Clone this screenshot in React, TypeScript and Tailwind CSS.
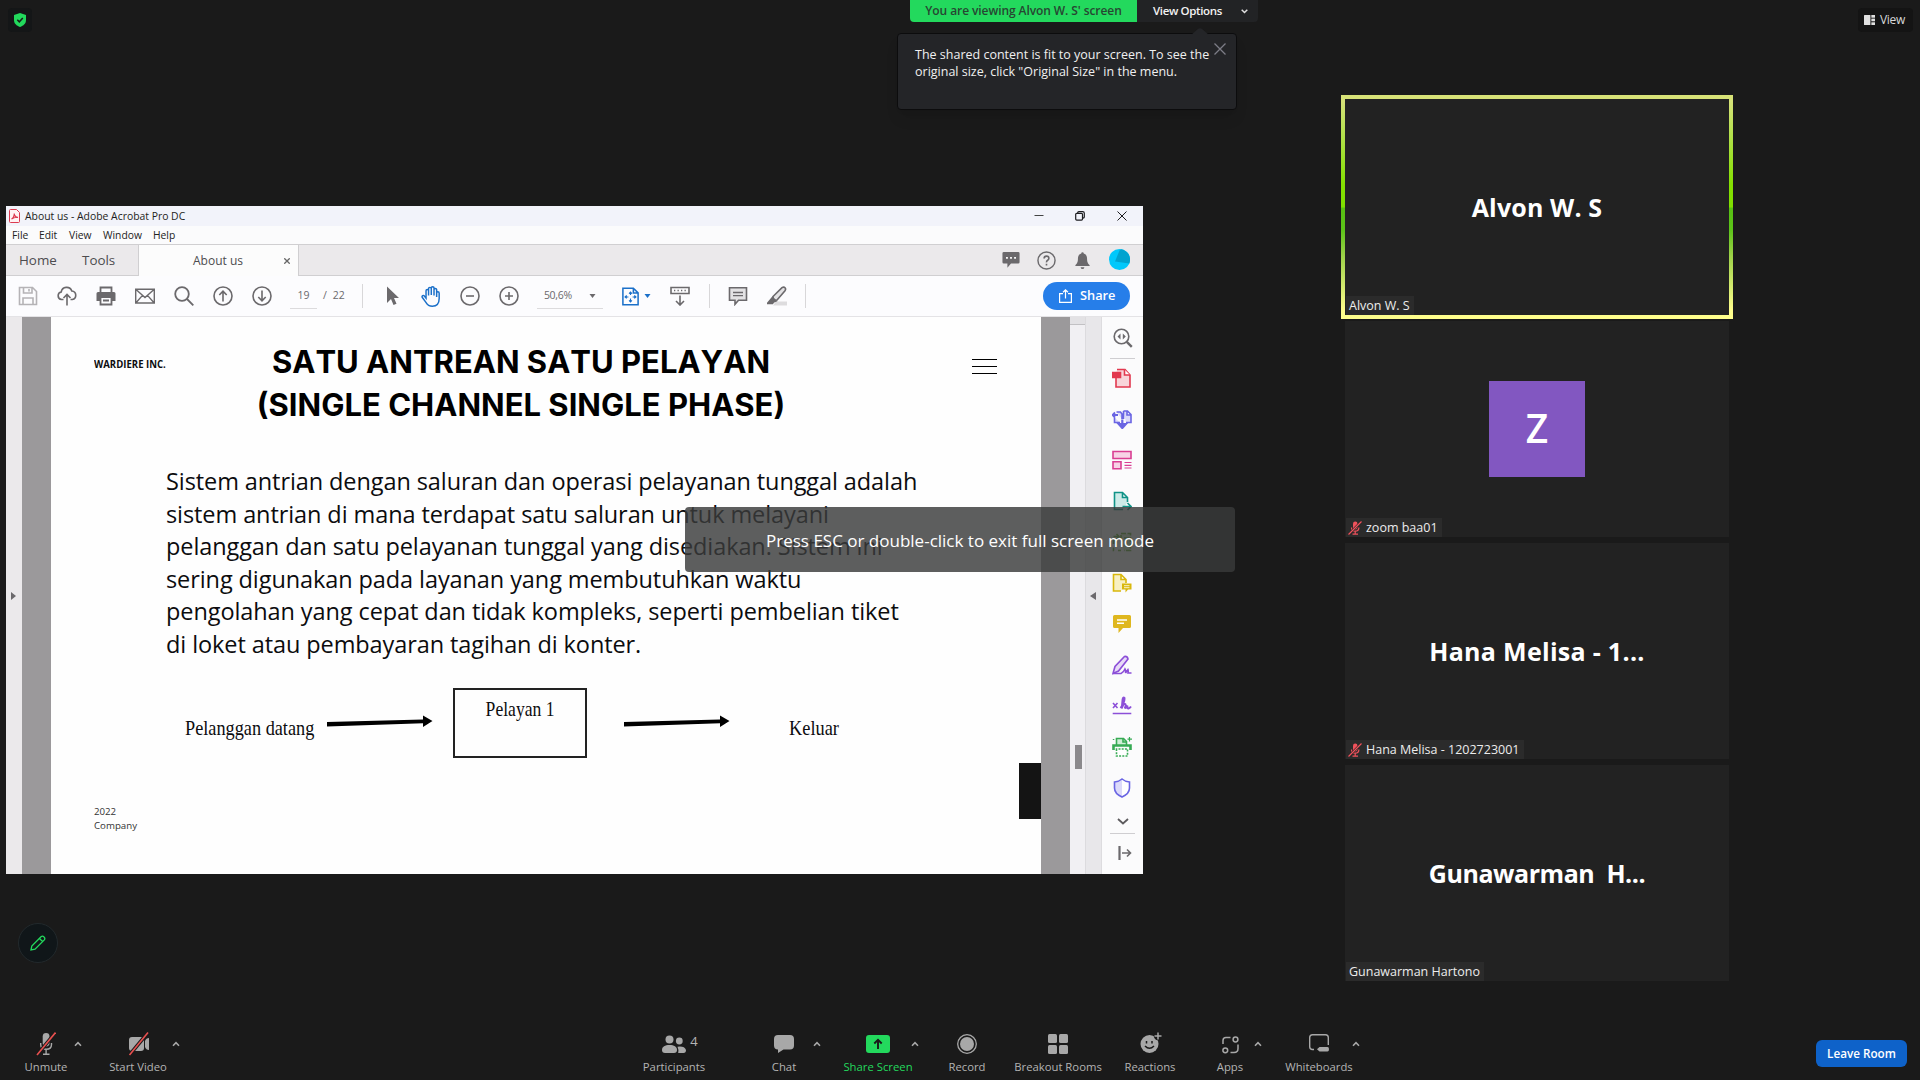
import type { ReactNode } from "react";
import { clsx } from "clsx";

type SvgProps = {
  children: ReactNode;
  size?: number;
  className?: string;
  stroke?: number;
};

// Outline icon on a 20px grid, coloured by currentColor
function Svg({ children, size = 20, className, stroke = 1.6 }: SvgProps) {
  return (
    <svg
      width={size}
      height={size}
      viewBox="0 0 20 20"
      fill="none"
      stroke="currentColor"
      strokeWidth={stroke}
      className={clsx("shrink-0", className)}
    >
      {children}
    </svg>
  );
}

function Caret({ className }: { className?: string }) {
  return (
    <svg width="7" height="4" viewBox="0 0 7 4" fill="currentColor" className={clsx("shrink-0", className)}>
      <path d="M0.500 0h6L3.500 4z" />
    </svg>
  );
}

/* ---------- Meeting header ---------- */

function MeetingHeader() {
  return (
    <header className="flex h-10 shrink-0 items-start">
      <div className="ml-2 mt-2 flex h-6 w-6 items-center justify-center rounded bg-[#141617]">
        <svg width="12" height="14" viewBox="0 0 12 14">
          <path d="M6 0l6 2v5c0 3.500-2.500 5.700-6 7-3.500-1.300-6-3.500-6-7V2z" fill="#22d95c" />
          <path d="M3.300 6.800l2 2 3.500-3.800" fill="none" stroke="#1a1a1a" strokeWidth="1.500" />
        </svg>
      </div>

      <div className="relative ml-[878px] flex h-[22px] w-[348px] overflow-visible">
        <div className="flex w-[227px] items-center justify-center rounded-bl bg-[#23d95d] text-[12px] font-semibold tracking-[-0.08px] whitespace-nowrap text-[#274632]">
          You are viewing Alvon W. S' screen
        </div>
        <div className="flex flex-1 items-center rounded-br bg-[#222325] pl-4 text-[11.5px] font-semibold tracking-[-0.36px] whitespace-nowrap text-[#f2f2f2]">
          <span className="w-[69px]">View Options</span>
          <svg width="7" height="5" viewBox="0 0 7 5" fill="none" stroke="#e0e0e0" strokeWidth="1.500" className="ml-[19px]">
            <path d="M0.700 0.700l2.800 2.800 2.800-2.800" />
          </svg>
        </div>

        <div className="absolute top-[33px] -left-[13px] z-10 flex h-[77px] w-[340px] rounded border border-[#0c0c0d] bg-[#242528] pt-[12px] pl-[17px] shadow-lg">
          <svg width="18" height="7" viewBox="0 0 18 7" className="absolute -top-[6px] left-[293px]">
            <path d="M0 7l7-6q2-1.500 4 0l7 6z" fill="#242528" />
          </svg>
          <p className="w-[297px] text-[12.5px] leading-[17px] whitespace-nowrap text-[#f0f0f0]">
            The shared content is fit to your screen. To see the
            <br />
            original size, click "Original Size" in the menu.
          </p>
          <svg width="12" height="12" viewBox="0 0 12 12" stroke="#7d7d86" strokeWidth="1.300" className="-mt-[3px] ml-[2px]">
            <path d="M0.500 0.500l11 11M11.500 0.500l-11 11" />
          </svg>
        </div>
      </div>

      <div className="mt-2 mr-[7px] ml-auto flex h-6 items-center gap-[5px] rounded bg-[#141414] pr-2 pl-[6px] text-[12px] tracking-[-0.3px] text-[#d8d8d8]">
        <svg width="11" height="10" viewBox="0 0 12 10" fill="#e0e0e0" preserveAspectRatio="none">
          <rect width="7" height="10" rx="0.500" />
          <rect x="8" width="4" height="2.700" />
          <rect x="8" y="3.600" width="4" height="2.700" />
          <rect x="8" y="7.300" width="4" height="2.700" />
        </svg>
        View
      </div>
    </header>
  );
}

/* ---------- Shared Acrobat window ---------- */

function TitleBar() {
  return (
    <div className="flex h-5 items-center bg-[#f2f3fa] pl-[3px] text-[#1d1d20]">
      <svg width="11" height="14" viewBox="0 0 11 14" fill="none" stroke="#dc3b50">
        <path d="M0.500 1.500q0-1 1-1h6l3 3v9q0 1-1 1h-8q-1 0-1-1z" fill="#fff2f3" />
        <path d="M2.500 10c2-1 3-4 2.700-5.500 0 2 1.800 4 3.800 3.800-2.500-.3-4.500.2-6.500 1.700z" strokeWidth="1.200" />
      </svg>
      <span className="ml-[5px] pt-[2px] text-[10.4px] whitespace-nowrap">About us - Adobe Acrobat Pro DC</span>
      <div className="mr-[16px] ml-auto flex items-center">
        <svg width="10" height="10" viewBox="0 0 10 10" stroke="#444">
          <path d="M0.500 4.500h9" />
        </svg>
        <svg width="10" height="10" viewBox="0 0 10 10" stroke="currentColor" fill="none" strokeWidth="1.200" className="ml-[31px]">
          <rect x="0.700" y="2.300" width="6.800" height="6.800" rx="1" />
          <path d="M2.700 2V1.800q0-1.200 1.200-1.200h3.800q1.600 0 1.600 1.600v3.600q0 1.300-1.400 1.300" />
        </svg>
        <svg width="10" height="10" viewBox="0 0 10 10" stroke="currentColor" className="ml-[32px]">
          <path d="M0.500 0.500l9 9M9.500 0.500l-9 9" />
        </svg>
      </div>
    </div>
  );
}

function MenuBar() {
  return (
    <div className="flex h-[18px] items-center bg-[#fbfbfc] pt-[2px] pl-[6px] text-[10.3px] text-[#222]">
      <span className="w-[27px]">File</span>
      <span className="w-[30px]">Edit</span>
      <span className="w-[34px]">View</span>
      <span className="w-[50px]">Window</span>
      <span>Help</span>
    </div>
  );
}

function TabBar() {
  return (
    <div className="flex h-8 border-y border-[#d0cfd1] bg-[#ebe9eb] text-[#4d4c4f]">
      <div className="flex w-[133px] items-center border-r border-[#d0cfd1] pl-[13px] text-[13.4px]">
        <span className="w-[63px]">Home</span>
        <span>Tools</span>
      </div>
      <div className="-mb-px flex w-[160px] items-center border-r border-[#d0cfd1] bg-[#fcfcfc] pl-[54px] text-[12px]">
        <span className="w-[50px] whitespace-nowrap">About us</span>
        <svg width="6" height="6" viewBox="0 0 6 6" stroke="#666" strokeWidth="1.300" className="ml-[41px]">
          <path d="M0.300 0.300l5.400 5.400M5.700 0.300l-5.400 5.400" />
        </svg>
      </div>
      <div className="mr-[13px] ml-auto flex items-center text-[#6b696c]">
        <Svg size={18}>
          <path d="M2 1h16q1.500 0 1.500 1.500v10q0 1.500-1.500 1.500h-8l-4 4.500V14H2Q.5 14 .5 12.500v-10Q.5 1 2 1z" fill="currentColor" stroke="none" />
          <path d="M4.500 7.700h2M9 7.700h2M13.500 7.700h2" stroke="#fff" strokeWidth="2" />
        </Svg>
        <Svg size={19} className="ml-[17px]" stroke={1.500}>
          <circle cx="10" cy="10" r="9" />
          <path d="M7.500 8q0-2.600 2.500-2.600T12.500 7.700q0 1.200-1.300 2T10 12M10 13.500v1.700" strokeWidth="1.700" />
        </Svg>
        <Svg size={19} className="ml-[17px]">
          <path
            d="M10 1.200q1.300 0 1.300 1.500c2.600.7 3.500 2.800 3.500 5.300 0 4 .8 5.200 2.700 7v.8h-15V15c1.900-1.800 2.700-3 2.700-7 0-2.500.9-4.600 3.500-5.300Q8.700 1.200 10 1.200zM8 17h4q-.3 2-2 2t-2-2z"
            fill="currentColor"
            stroke="none"
          />
        </Svg>
        <svg width="21" height="21" viewBox="0 0 21 21" className="ml-[17px] -mt-px">
          <circle cx="10.500" cy="10.500" r="10.500" fill="#00c8fb" />
          <path d="M10.500 1.500L6 12.500l14.300 2A10.500 10.500 0 0 0 12 .2z" fill="#00a3cf" />
        </svg>
      </div>
    </div>
  );
}

// Icons sit in fixed-width cells so that their centres keep the 39px rhythm
function Tool({ children, className }: { children: ReactNode; className?: string }) {
  return <div className={clsx("flex w-[39px] shrink-0 justify-center", className)}>{children}</div>;
}

function Toolbar() {
  return (
    <div className="flex h-[41px] items-center border-b border-[#e4e3e6] bg-[#fcfcfe] pl-[2px] text-[#6b696c]">
      <Tool className="text-[#b5b3b6]">
        <Svg>
          <path d="M1.500 1.500h13l4 4v13h-17zM5.500 1.500v5.500h8.500v-5.500M5 18.500v-6.500h10v6.500M11 3v2.500" />
        </Svg>
      </Tool>
      <Tool>
        <Svg>
          <path d="M6.500 13.500H4.500a3.800 3.800 0 0 1-.3-7.500A5.500 5.500 0 0 1 14.800 5a4.300 4.300 0 0 1 .5 8.500H13.500M10 19.500V9M6.500 12L10 8.500l3.500 3.500" />
        </Svg>
      </Tool>
      <Tool>
        <Svg>
          <path d="M4.500 6V1.500h11V6" strokeWidth="1.800" />
          <path d="M2 6h16q1.500 0 1.500 1.500V15h-3.500v-3H4v3H.5V7.500Q.5 6 2 6z" fill="currentColor" stroke="none" />
          <path d="M4.500 11h11v7.500h-11zM7 14.500h6" strokeWidth="1.800" />
        </Svg>
      </Tool>
      <Tool>
        <Svg stroke={1.400}>
          <path d="M.7 3.200h18.600v13.800H.7zM1 3.500l9 8 9-8M1 16.700l6.500-7.300M19 16.700l-6.500-7.300" />
        </Svg>
      </Tool>
      <Tool>
        <Svg stroke={1.800}>
          <circle cx="8" cy="8" r="6.800" />
          <path d="M13 13l6.300 6.300" />
        </Svg>
      </Tool>
      <Tool className="pl-px">
        <Svg>
          <circle cx="10" cy="10" r="9" />
          <path d="M10 15.500V5.500M6.300 9L10 5.200 13.700 9" />
        </Svg>
      </Tool>
      <Tool className="pl-px">
        <Svg>
          <circle cx="10" cy="10" r="9" />
          <path d="M10 4.500v10M6.300 11l3.700 3.800 3.700-3.800" />
        </Svg>
      </Tool>

      <span className="ml-[9px] flex h-[25px] w-[27px] items-center justify-center border-b border-[#dcdbdd] text-[10.5px]">19</span>
      <span className="ml-[6px] text-[10.5px]">/</span>
      <span className="ml-[6px] text-[10.5px]">22</span>
      <div className="ml-[17px] h-6 w-px bg-[#d8d7d9]" />

      <Tool className="ml-[10px]">
        <Svg>
          <path d="M5 .5v16.500l4-4 2.500 6 3-1.300-2.500-5.700h5z" fill="currentColor" stroke="none" />
        </Svg>
      </Tool>
      <Tool className="text-[#1b70c9]">
        <Svg size={21} stroke={1.400}>
          <path d="M4.800 11.500V4.600q0-1.300 1.200-1.300t1.200 1.300V9V2.600q0-1.300 1.300-1.300t1.300 1.300V8.500V2q0-1.200 1.300-1.200T12.400 2v7V3.500q0-1.200 1.200-1.200T14.900 3.500v7V6.800q0-1.300 1.200-1.300t1.200 1.300V12c0 5-2.300 7.300-6.500 7.300-3.500 0-5-1.800-6.300-4L1.300 11q-.7-1.300.3-1.900 1-.5 1.800.6z" />
        </Svg>
      </Tool>
      <Tool>
        <Svg>
          <circle cx="10" cy="10" r="9" />
          <path d="M6 10h8" />
        </Svg>
      </Tool>
      <Tool>
        <Svg>
          <circle cx="10" cy="10" r="9" />
          <path d="M6 10h8M10 6v8" />
        </Svg>
      </Tool>

      <div className="ml-[8px] flex h-[25px] w-[66px] items-center border-b border-[#dcdbdd] pl-[7px] text-[10.5px]">
        <span className="w-[29px] tracking-[-0.3px]">50,6%</span>
        <Caret className="ml-[16px]" />
      </div>
      <div className="ml-[18px] flex items-center gap-[5px] text-[#1b70c9]">
        <Svg size={19} className="-mr-px">
          <path d="M2 1.200h11l5 5v12.600H2zM13 1.200v5h5" />
          <path d="M10 5.500v3M10 12v3.500M4.500 10.500h3.300M12.200 10.500h3.300M8.500 7L10 5.300 11.500 7M8.500 14l1.500 1.700 1.500-1.700M6 9l-1.700 1.500L6 12M14 9l1.700 1.500L14 12" strokeWidth="1.200" />
        </Svg>
        <Caret />
      </div>
      <Tool className="ml-[10px]">
        <Svg>
          <path d="M1 1.500h18v6H1z" />
          <path d="M4 4.500h1.300M7.500 4.500h1.300M11 4.500h1.300M14.500 4.500h1.300" />
          <path d="M10 9.500v9M6 15l4 4 4-4" />
        </Svg>
      </Tool>
      <div className="ml-[9px] h-6 w-px bg-[#d8d7d9]" />
      <Tool className="ml-[9px]">
        <Svg>
          <path d="M1.500 1.800h17v12.500h-8l-3.500 4v-4H1.500z" fill="#e3e2e4" />
          <path d="M5 6.500h10M5 9.700h10" strokeWidth="1.300" />
        </Svg>
      </Tool>
      <Tool>
        <Svg>
          <path d="M9 15.500h11v4H6z" fill="#dddcde" stroke="none" />
          <path d="M6 10.500L15 1.700q1.800-1.300 3 0t0 3L10 14l-3.500.5z" fill="#e3e2e4" />
          <path d="M5.500 11.500l3.500 3.500-2.500 1-1 1.500H.5z" fill="currentColor" />
        </Svg>
      </Tool>
      <div className="ml-[8px] h-6 w-px bg-[#d8d7d9]" />

      <button className="mr-[13px] ml-auto flex h-7 w-[87px] items-center rounded-full bg-[#267ee9] pl-4 text-[12.8px] font-semibold text-white">
        <svg width="13" height="14" viewBox="0 0 13 14" fill="none" stroke="#fff" strokeWidth="1.200">
          <path d="M4 4.600H.6v8.700h11.800V4.600H9M6.500 9.500V1M4 3.300L6.500.9 9 3.300" />
        </svg>
        <span className="ml-[8px]">Share</span>
      </button>
    </div>
  );
}

function FlowArrow({ className }: { className?: string }) {
  return (
    <svg width="106" height="14" viewBox="0 0 106 14" className={className}>
      <path d="M0 7l96-2.500V0.500L105.500 6 96 12V8.200L0 11.500z" fill="#000" />
    </svg>
  );
}

function Slide() {
  return (
    <div className="flex w-[990px] flex-col overflow-hidden bg-[#fefefe] text-[#0c0c0e]">
      <div className="flex h-[148px] items-start pt-[23px] pl-[43px]">
        <span className="mt-[16px] w-[129px] origin-left scale-x-[0.93] text-[10.3px] leading-[16px] font-bold whitespace-nowrap">
          WARDIERE INC.
        </span>
        <h1 className="w-[596px] text-center font-['Inter',sans-serif] text-[31px] leading-[43px] font-bold whitespace-nowrap text-black [font-kerning:none] [font-optical-sizing:none]">
          SATU ANTREAN SATU PELAYAN
          <br />
          (SINGLE CHANNEL SINGLE PHASE)
        </h1>
        <div className="mt-[19px] ml-[153px] flex w-[25px] flex-col gap-[6px]">
          <div className="h-px bg-black" />
          <div className="h-px bg-black" />
          <div className="h-px bg-black" />
        </div>
      </div>

      <p className="h-[195px] pl-[115px] text-[23.5px] leading-[32.5px] tracking-[-0.09px] whitespace-nowrap">
        Sistem antrian dengan saluran dan operasi pelayanan tunggal adalah
        <br />
        sistem antrian di mana terdapat satu saluran untuk melayani
        <br />
        pelanggan dan satu pelayanan tunggal yang disediakan. Sistem ini
        <br />
        sering digunakan pada layanan yang membutuhkan waktu
        <br />
        pengolahan yang cepat dan tidak kompleks, seperti pembelian tiket
        <br />
        di loket atau pembayaran tagihan di konter.
      </p>

      <div className="mt-[28px] flex h-[70px] items-start pl-[134px] font-['Liberation_Serif',serif] text-[22px] leading-[24px] whitespace-nowrap">
        <span className="mt-[28px] w-[142px] origin-left scale-x-[0.83]">Pelanggan datang</span>
        <FlowArrow className="mt-[27px]" />
        <div className="ml-[20px] flex h-[70px] w-[134px] justify-center border-2 border-[#222] pt-[7px]">
          <span className="origin-center scale-x-[0.8]">Pelayan 1</span>
        </div>
        <FlowArrow className="mt-[27px] ml-[37px]" />
        <span className="mt-[28px] ml-[59px] origin-left scale-x-[0.835]">Keluar</span>
      </div>

      <div className="flex grow items-start justify-between pt-[5px] pl-[43px]">
        <p className="mt-[42px] text-[9.7px] leading-[13.5px] text-[#333]">
          2022
          <br />
          Company
        </p>
        <div className="h-[56px] w-[22px] bg-[#141414]" />
      </div>
    </div>
  );
}

function SideIcon({ children, className }: { children: ReactNode; className?: string }) {
  return (
    <div className={clsx("flex h-[41px] shrink-0 items-center justify-center pr-px", className)}>
      <Svg>{children}</Svg>
    </div>
  );
}

function ToolsPane() {
  return (
    <div className="flex w-[42px] flex-col border-l border-[#dddcdf] bg-[#fbfbfc]">
      <div className="flex h-[41px] items-center justify-center text-[#6b696c]">
        <Svg>
          <circle cx="8.500" cy="8.500" r="7.300" />
          <path d="M13.800 13.800l5 5" strokeWidth="2.400" />
          <path d="M7.500 5.500v6l-3-3zM9.800 5.500v6l3-3z" fill="currentColor" stroke="none" />
        </Svg>
      </div>
      <div className="mx-auto -mb-[2px] h-px w-[25px] shrink-0 bg-[#cfced1]" />

      <SideIcon className="text-[#e2394f]">
        <path d="M4 8v11h14V7l-5-5.500H5" fill="#f8d5da" />
        <path d="M.5 4.500h8v5h-8z" fill="#e2394f" />
        <path d="M12.500 1.500V7H18" fill="#fff" />
      </SideIcon>
      <SideIcon className="text-[#6a65e3]">
        <path d="M8 13.500H2.500V8.500M4.500 3h4l1.500 2v5M11.500 2h4l3.500 3.500v8h-5M11.500 2v8M15 2v4h4" fill="#dcdafa" />
        <path d="M.5 6h5.500M3 3.500L.5 6 3 8.500" strokeWidth="1.800" />
        <path d="M10.300 10.500v5M6.800 15h7l-3.500 4z" fill="currentColor" strokeWidth="2.200" />
      </SideIcon>
      <SideIcon className="text-[#d93e92]">
        <path d="M1 1.500h18v7H1zM1 11.800h8v7H1z" fill="#f7d3e6" />
        <path d="M12.500 12.500h7M12.500 15.300h7M12.500 18h7" strokeWidth="1.200" />
      </SideIcon>
      <SideIcon className="text-[#109387]">
        <path d="M11 18.500H2.500v-17h8l5 5V11M10.500 1.500v5h5" fill="#cdebe8" />
        <path d="M10.500 15.500h8M15.500 12l3.500 3.500-3.500 3.500" />
      </SideIcon>
      <SideIcon className="text-[#5fae25]">
        <path d="M9 8V1.500h9.500v17H12M9 18.500H6M2 18.500h-.5v-3M1.500 12V8h3M12 6h5" fill="#dff0ce" strokeDasharray="5 1.500" />
        <path d="M1.500 4.500h5M4.500 2l2.500 2.500L4.500 7" />
      </SideIcon>
      <SideIcon className="text-[#d9b80c]">
        <path d="M9 18H1.500V1.500H9l5 5V10M9 1.500v5h5" fill="#f8f0c2" />
        <path d="M10 10.500h9.500v6H16l-2.500 3v-3H10z" fill="currentColor" stroke="none" />
        <path d="M12 12.700h5.500M12 14.700h5.500" stroke="#fff" strokeWidth=".8" />
      </SideIcon>
      <SideIcon className="text-[#dfb71f]">
        <path d="M2.500 1h15Q19 1 19 2.500v10q0 1.500-1.500 1.500H11l-4.500 5V14h-4Q1 14 1 12.500v-10Q1 1 2.500 1z" fill="currentColor" stroke="none" />
        <path d="M5 6h10M5 9.300h7" stroke="#fff" />
      </SideIcon>
      <SideIcon className="text-[#8c4fd8]">
        <path d="M1 18.500l2-7L12.500 1.500q2.800-.5 3.500 2.500L6.500 16z" fill="#e8daf7" />
        <path d="M1 18.500h8q2.500-1 4-4.500 1 1.500.5 4l2.500-3.500q.5 1 0 3.500h3.500" />
      </SideIcon>
      <SideIcon className="text-[#8c4fd8]">
        <path d="M1 7l4.500 5M5.500 7L1 12M.7 17.500h18.600" />
        <path d="M8.500 12Q13 6 12.500 2 11 .5 10.500 4L9.700 12.500q1.800-5 3.300-4.500t0 3.500q.7 1.500 2.500-2-.5 3.500 1 3t2.500-2" strokeWidth="1.900" />
      </SideIcon>
      <SideIcon className="text-[#37ab54]">
        <path d="M4.500 8V1.500h7l3 3V8" fill="#cfeed6" />
        <path d="M11 1.500v3.500h3.500" />
        <path d="M1.500 13V8.500h17V13" strokeWidth="2.600" />
        <path d="M4.500 12v7h11v-7z" fill="#fff" strokeDasharray="2 1.200" />
        <path d="M17.500 0v4.500M15.500 2.200h4.500M.8 2.500h1.500" strokeWidth="1.200" />
      </SideIcon>
      <SideIcon className="text-[#6a65e3]">
        <path d="M10 1v18c4.500-2 7.500-5 7.500-9V4Q13 3.500 10 1z" fill="#fff" stroke="none" />
        <path d="M10 1v18C5.500 17 2.500 14 2.500 10V4Q7 3.500 10 1z" fill="#dcdafa" stroke="none" />
        <path d="M10 1q3 2.500 7.500 3v6c0 4-3 7-7.500 9C5.500 17 2.500 14 2.500 10V4Q7 3.500 10 1z" />
      </SideIcon>

      <svg width="12" height="7" viewBox="0 0 12 7" fill="none" stroke="#5d5b5e" strokeWidth="1.800" className="mx-auto mt-[10px] shrink-0">
        <path d="M1 1l5 4.500L11 1" />
      </svg>
      <div className="mx-auto mt-[8px] h-px w-[25px] shrink-0 bg-[#cfced1]" />
      <svg width="14" height="14" viewBox="0 0 14 14" fill="none" stroke="#6b696c" strokeWidth="1.600" className="mt-[12px] ml-[16px] shrink-0">
        <path d="M1.500 0v14" strokeWidth="2.200" />
        <path d="M4 7h8.500M9 3.500L12.500 7 9 10.500" />
      </svg>
    </div>
  );
}

function SharedWindow() {
  return (
    <section className="flex h-[668px] w-[1137px] flex-col bg-white">
      <TitleBar />
      <MenuBar />
      <TabBar />
      <Toolbar />
      <div className="flex min-h-0 flex-1">
        <div className="flex w-4 items-center justify-center bg-[#ebe9eb] pr-px">
          <svg width="5" height="8" viewBox="0 0 5 8" fill="#6b696c">
            <path d="M0 0v8l5-4z" />
          </svg>
        </div>
        <div className="w-[29px] bg-[#9b999b]" />
        <Slide />
        <div className="w-[29px] bg-[#9b999b]" />
        <div className="flex w-4 flex-col items-center border-r border-[#dcdbde] bg-[#f1f0f3]">
          <div className="h-2 w-full border-b border-[#c2c1c4] bg-[#e3e2e5]" />
          <div className="mt-[420px] ml-px h-6 w-[7px] bg-[#8b898c]" />
        </div>
        <div className="flex w-[15px] items-center justify-center bg-[#e8e7ea] pr-px">
          <svg width="6" height="8" viewBox="0 0 6 8" fill="#6b696c">
            <path d="M6 0v8L0 4z" />
          </svg>
        </div>
        <ToolsPane />
      </div>
    </section>
  );
}

/* ---------- Participants ---------- */

type Participant = {
  label: string;
  name?: string;
  nameClass?: string;
  initial?: string;
  muted?: boolean;
  speaking?: boolean;
};

const PARTICIPANTS: Participant[] = [
  { label: "Alvon W. S", name: "Alvon W. S", nameClass: "tracking-[0.15px]", speaking: true },
  { label: "zoom baa01", initial: "Z", muted: true },
  { label: "Hana Melisa - 1202723001", name: "Hana Melisa - 1...", nameClass: "tracking-[0.3px]", muted: true },
  { label: "Gunawarman Hartono", name: "Gunawarman \u00a0H...", nameClass: "tracking-[-0.45px]" },
];

function MutedMic() {
  return (
    <svg width="14" height="14" viewBox="0 0 14 14" fill="none" stroke="#f0525c" strokeWidth="1.200" className="mr-[4px] -ml-px mb-px">
      <rect x="5" y="0.500" width="4.500" height="8" rx="2.200" fill="#f0525c" stroke="none" />
      <path d="M3.500 6.500q0 3.700 3.700 3.700t3.700-3.700M7.200 10v3M4.500 13.200h5.500" />
      <path d="M0.500 13.500L13.500 0.500" stroke="#262626" strokeWidth="2.400" />
      <path d="M0.500 13.500L13.500 0.500" />
    </svg>
  );
}

function Tile({ label, name, nameClass, initial, muted, speaking }: Participant) {
  return (
    <div
      className={clsx(
        speaking &&
          "-m-1 bg-[linear-gradient(to_bottom,#d8e277_0%,#d5e277_3%,#b3e14b_18%,#84e000_40%,#7fdf00_50%,#58c012_50.5%,#5cc418_60%,#9ed248_72%,#fdfd8b_96%,#ffff8c_100%)] p-1"
      )}
    >
      <div className="relative flex h-[216px] w-[384px] items-center justify-center bg-[#222]">
        {initial ? (
          <div className="flex h-24 w-24 items-center justify-center bg-[#8257c1] pb-[2px] text-[39px] font-semibold text-white">{initial}</div>
        ) : (
          <span className={clsx("pt-[2px] text-[25px] font-bold whitespace-nowrap text-white", nameClass)}>{name}</span>
        )}
        <div className="absolute bottom-0 left-px flex h-[19px] items-center bg-[#2b2b2b] pt-px pr-1 pl-[3px] text-[12.5px] whitespace-nowrap text-[#ededed]">
          {muted && <MutedMic />}
          {label}
        </div>
      </div>
    </div>
  );
}

/* ---------- Meeting controls ---------- */

function Control({ label, children, className }: { label: string; children: ReactNode; className: string }) {
  return (
    <div className={clsx("flex shrink-0 flex-col items-center", className)}>
      <div className="flex h-6 items-center justify-center">{children}</div>
      <span className="mt-[3px] text-[11.3px] leading-4 whitespace-nowrap">{label}</span>
    </div>
  );
}

function MoreCaret({ className }: { className?: string }) {
  return (
    <svg width="10" height="24" viewBox="0 0 10 24" fill="none" stroke="#a8a8a8" strokeWidth="1.600" className={clsx("shrink-0", className)}>
      <path d="M2 13.700L5 10.700 8 13.700" />
    </svg>
  );
}

function MeetingControls() {
  return (
    <footer className="flex h-[70px] shrink-0 pt-[22px] text-[#b4b4b4]">
      <Control label="Unmute" className="ml-[14px] w-16">
        <svg width="20" height="24" viewBox="0 0 20 24" fill="none" stroke="#a8a8a8" strokeWidth="1.400">
          <rect x="6.700" y="1" width="6.800" height="13.500" rx="3.400" fill="#a8a8a8" stroke="none" />
          <path d="M4.700 11v1.500q0 4.800 5.400 4.800t5.400-4.800V11M10.100 17.500v4.500M7 22.300h6.500" />
          <path d="M1 23L19.500.5" stroke="#1a1a1a" strokeWidth="3.600" />
          <path d="M1 23L19.500.5" stroke="#e8504f" strokeWidth="1.600" />
        </svg>
      </Control>
      <MoreCaret className="-ml-[5px]" />
      <Control label="Start Video" className="ml-[22px] w-[66px]">
        <svg width="24" height="24" viewBox="0 0 24 24" fill="#a8a8a8" className="ml-[2px]">
          <rect x="2" y="5" width="15" height="14" rx="3" />
          <path d="M18 9q1-3 4-3v12q-3 0-4-3z" />
          <path d="M2.500 23L21 .5" stroke="#1a1a1a" strokeWidth="3.600" />
          <path d="M2.500 23L21 .5" stroke="#e8504f" strokeWidth="1.600" />
        </svg>
      </Control>
      <MoreCaret />

      <Control label="Participants" className="ml-[460px] w-[66px]">
        <svg width="24" height="18" viewBox="0 0 24 18" fill="#a8a8a8" className="ml-[12px]">
          <circle cx="7.500" cy="4.500" r="4" />
          <circle cx="17.300" cy="6" r="3.400" />
          <path d="M0 15c0-3.200 3-5 7.500-5s7.500 1.800 7.500 5q0 3-3 3H3q-3 0-3-3z" />
          <path d="M16.200 18q1-2.500-.7-6.300 7-1 8.500 3.300 0 3-2.500 3z" />
        </svg>
        <span className="ml-[4px] -mt-[4px] text-[13px]">4</span>
      </Control>
      <Control label="Chat" className="ml-[49px] w-14">
        <svg width="20" height="18" viewBox="0 0 20 18" fill="#a8a8a8">
          <path d="M4 0h12q4 0 4 4v6.500q0 4-4 4H9.500L4 18v-3.500q-4 0-4-4V4q0-4 4-4z" />
        </svg>
      </Control>
      <MoreCaret />
      <Control label="Share Screen" className="ml-[19px] w-[74px] text-[#23d95d]">
        <svg width="24" height="18" viewBox="0 0 24 18">
          <rect width="24" height="18" rx="3" fill="#23d95d" />
          <path d="M12 14V5.500M8.300 8.500L12 4.800l3.700 3.700" fill="none" stroke="#1a1a1a" strokeWidth="1.900" />
        </svg>
      </Control>
      <MoreCaret className="-ml-[5px]" />
      <Control label="Record" className="ml-[19px] w-14">
        <svg width="20" height="20" viewBox="0 0 20 20">
          <circle cx="10" cy="10" r="9.300" fill="none" stroke="#a8a8a8" strokeWidth="1.300" />
          <circle cx="10" cy="10" r="7" fill="#a8a8a8" />
        </svg>
      </Control>
      <Control label="Breakout Rooms" className="ml-4 w-[94px]">
        <svg width="20" height="20" viewBox="0 0 20 20" fill="#a8a8a8">
          <rect width="9" height="9" rx="1.500" />
          <rect x="11" width="9" height="9" rx="1.500" />
          <rect y="11" width="9" height="9" rx="1.500" />
          <rect x="11" y="11" width="9" height="9" rx="1.500" />
        </svg>
      </Control>
      <Control label="Reactions" className="ml-[11px] w-[68px]">
        <svg width="22" height="22" viewBox="0 0 22 22" fill="none" stroke="#a8a8a8" className="-mt-[2px] ml-[2px]">
          <circle cx="9.500" cy="12" r="9" fill="#a8a8a8" stroke="none" />
          <circle cx="18" cy="4" r="4.200" fill="#1a1a1a" stroke="none" />
          <path d="M18 .5v7M14.500 4h7" strokeWidth="1.500" />
          <path d="M6.500 9v2.500M12 9v2.500M5 14q4.500 4.500 9 0" stroke="#1a1a1a" strokeWidth="1.500" />
        </svg>
      </Control>
      <Control label="Apps" className="ml-[23px] w-[46px]">
        <svg width="17" height="18" viewBox="0 0 17 18" fill="none" stroke="#a8a8a8" strokeWidth="1.500" className="mt-[2px]">
          <path d="M1 8V4.500Q1 1.500 4 1.500h4.500M16 8.500v4q0 4-4 4H8.500" />
          <circle cx="13.500" cy="3.500" r="2.400" />
          <circle cx="3.300" cy="14.300" r="2.400" />
        </svg>
      </Control>
      <MoreCaret />
      <Control label="Whiteboards" className="ml-[19px] w-[74px]">
        <svg width="20" height="18" viewBox="0 0 20 18" fill="none" stroke="#a8a8a8" strokeWidth="1.400" className="-mt-[2px]">
          <path d="M5 15.500H3.500q-2.800 0-2.800-2.800V3.500Q.7.700 3.500.7h13q2.800 0 2.800 2.800v7.500" />
          <path d="M8 15.200l2.500-2.200h8q1.500 0 1.500 2.200t-1.500 2.300h-8z" fill="#a8a8a8" stroke="none" />
        </svg>
      </Control>
      <MoreCaret className="-ml-[5px]" />

      <button className="mt-[8px] mr-[13px] ml-auto h-[27px] w-[91px] rounded-md bg-[#0e62c9] text-[11.7px] font-semibold text-white">
        Leave Room
      </button>
    </footer>
  );
}

export default function App() {
  return (
    <div className="relative flex h-[1080px] w-[1920px] flex-col overflow-hidden bg-[#1a1a1a] font-['Open_Sans','Noto_Sans',sans-serif]">
      <MeetingHeader />

      <main className="flex min-h-0 flex-1">
        <div className="w-[1345px] pt-[166px] pl-[6px]">
          <SharedWindow />
          <div className="mt-[49px] ml-[12px] flex h-10 w-10 items-center justify-center rounded-full border border-[#22292c] bg-[#101619]">
            <svg width="16" height="16" viewBox="0 0 16 16" fill="none" stroke="#23d95d" strokeWidth="1.300">
              <path d="M1 15l.8-4L11 1.700q1.500-1.200 3 .2t.3 3L5 14.200zM9.500 3.500l3 3" />
            </svg>
          </div>
        </div>
        <div className="flex flex-col gap-[6px] pt-[59px]">
          {PARTICIPANTS.map((p) => (
            <Tile key={p.label} {...p} />
          ))}
        </div>
      </main>

      <MeetingControls />

      {/* Full screen hint */}
      <div className="absolute top-[507px] left-[685px] flex h-[65px] w-[550px] items-center justify-center rounded bg-[#393a3b]/82 pt-[2px] text-[17px] whitespace-nowrap text-white">
        Press ESC or double-click to exit full screen mode
      </div>
    </div>
  );
}
